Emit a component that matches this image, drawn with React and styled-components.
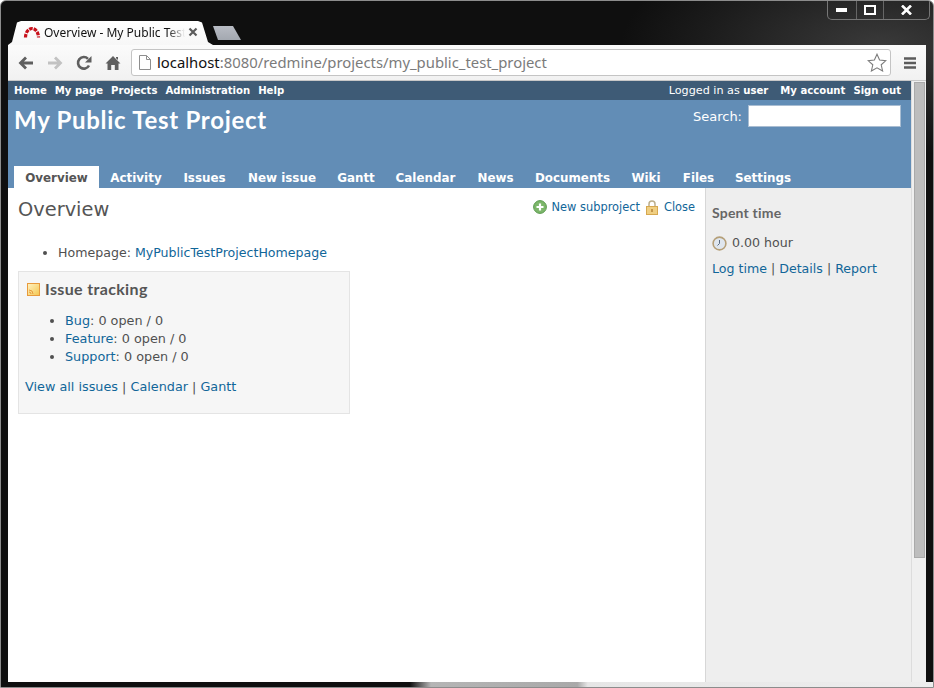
import React from 'react';
import styled, { createGlobalStyle } from 'styled-components';

const Global = createGlobalStyle`
  html, body { margin: 0; padding: 0; overflow: hidden; }
  body { font-family: "DejaVu Sans", Verdana, sans-serif; }
  ul { margin: 0; padding: 0; }
`;

const Window = styled.div`
  position: relative;
  box-sizing: border-box;
  width: 934px;
  height: 688px;
  display: flex;
  flex-direction: column;
  background: radial-gradient(ellipse 260px 110px at 880px 45px, #3a3a3a, #1b1b1b 70%, #0f0f0f);
  border: 1px solid #8c8c8c;
  border-radius: 6px 6px 0 0;
  overflow: hidden;
`;

const WindowControls = styled.div`
  position: absolute;
  top: -1px;
  right: 3px;
  width: 103px;
  height: 20px;
  display: flex;
  box-sizing: border-box;
  border: 1px solid #777;
  border-top: 0;
  border-radius: 0 0 5px 5px;
`;

const ControlButton = styled.div`
  width: ${p => p.$w}px;
  display: flex;
  align-items: center;
  justify-content: center;
  border-left: ${p => (p.$first ? 0 : '1px solid #666')};
`;

const TabStrip = styled.div`
  height: 44px;
  flex: none;
  display: flex;
  align-items: flex-end;
  padding-left: 7px;
`;

const Tab = styled.div`
  width: 205px;
  height: 24px;
  flex: none;
  box-sizing: border-box;
  display: flex;
  align-items: center;
  padding: 0 15px 2px;
  gap: 3px;
  background: linear-gradient(#ffffff, #f7f7f7);
  clip-path: polygon(0 100%, 4px 88%, 9px 6%, 13px 0, 190px 0, 194px 6%, 200px 88%, 205px 100%);
  font: 12px "Noto Sans", "Open Sans", sans-serif;
  color: #111;
`;

const TabTitle = styled.span`
  flex: 1;
  overflow: hidden;
  white-space: nowrap;
  -webkit-mask-image: linear-gradient(90deg, #000 88%, transparent);
  mask-image: linear-gradient(90deg, #000 88%, transparent);
`;

const NewTab = styled.div`
  width: 30px;
  height: 14px;
  margin: 0 0 5px -2px;
  background: linear-gradient(#b8bcc4, #a3a8b0);
  clip-path: polygon(2px 0, 22px 0, 30px 100%, 7px 100%);
`;

const Browser = styled.div`
  flex: 1;
  min-height: 0;
  display: flex;
  flex-direction: column;
  margin: 0 7px 5px 7px;
  background: #f1f1f1;
`;

const Toolbar = styled.div`
  height: 36px;
  flex: none;
  box-sizing: border-box;
  display: flex;
  align-items: center;
  background: linear-gradient(#fbfbfb, #f1f1f1);
  border-bottom: 1px solid #c8c8c8;
  padding-left: 3px;
`;

const NavButton = styled.div`
  width: ${p => p.$w || 29}px;
  flex: none;
  display: flex;
  justify-content: center;
  align-items: center;
`;

const Omnibox = styled.div`
  width: 760px;
  height: 27px;
  flex: none;
  margin-left: 4px;
  box-sizing: border-box;
  display: flex;
  align-items: center;
  gap: 6px;
  padding: 0 3px 0 7px;
  background: #fff;
  border: 1px solid #c4c4c4;
  border-radius: 3px;
  font: 14.85px "Noto Sans", "Open Sans", sans-serif;
  color: #7b7b7b;
`;

const Address = styled.span`
  flex: 1;
  padding-bottom: 2px;
  white-space: nowrap;
  b { font-weight: 400; color: #111; }
`;

const Viewport = styled.div`
  flex: 1;
  min-height: 0;
  display: flex;
  background: #fff;
`;

const Page = styled.div`
  width: 903px;
  flex: none;
  display: flex;
  flex-direction: column;
`;

const Scrollbar = styled.div`
  width: 15px;
  flex: none;
  box-sizing: border-box;
  padding: 1px 1px 0 2px;
  background: #efefef;
  border-left: 1px solid #dcdcdc;
`;

const Thumb = styled.div`
  height: 476px;
  background: #bdbdbd;
  border: 1px solid #a9a9a9;
  box-sizing: border-box;
`;

const TopMenu = styled.div`
  height: 19px;
  flex: none;
  box-sizing: border-box;
  display: flex;
  align-items: center;
  justify-content: space-between;
  padding: 0 10px 1px 6px;
  background: #3e5b76;
  color: #fff;
  font-size: 11.2px;
`;

const MenuGroup = styled.div`
  display: flex;
  align-items: baseline;
  gap: 8px;
`;

const MenuLink = styled.span`
  font-size: 10.1px;
  font-weight: 700;
  margin-left: ${p => p.$offset || 0}px;
`;

const Header = styled.div`
  height: 88px;
  flex: none;
  box-sizing: border-box;
  display: flex;
  flex-direction: column;
  background: #628db6;
  color: #fff;
  padding: 5px 10px 0 6px;
`;

const HeaderTop = styled.div`
  flex: 1;
  display: flex;
  justify-content: space-between;
  align-items: flex-start;
`;

const Title = styled.h1`
  margin: 0;
  font: 700 24px/30px "Lato", "Open Sans", sans-serif;
  letter-spacing: 0.72px;
`;

const Search = styled.div`
  display: flex;
  align-items: center;
  gap: 6px;
  font-size: 13px;
`;

const SearchInput = styled.div`
  width: 153px;
  height: 22px;
  box-sizing: border-box;
  background: #fff;
  border: 1px solid #a9bdd2;
`;

const Tabs = styled.div`
  display: flex;
  height: 22px;
  margin-right: -10px;
`;

const TabLink = styled.div`
  width: ${p => p.$w}px;
  flex: none;
  box-sizing: border-box;
  padding-top: 4px;
  margin-right: ${p => (p.$active ? 1 : 0)}px;
  font-size: 11.9px;
  font-weight: 700;
  line-height: 16px;
  text-align: center;
  white-space: nowrap;
  color: ${p => (p.$active ? '#555' : '#fff')};
  background: ${p => (p.$active ? '#fff' : 'transparent')};
`;

const Main = styled.div`
  flex: 1;
  min-height: 0;
  display: flex;
`;

const Content = styled.div`
  width: 697px;
  flex: none;
  box-sizing: border-box;
  padding: 8px 10px;
  background: #fff;
  color: #505050;
  font-size: 12.8px;
`;

const Sidebar = styled.div`
  flex: 1;
  box-sizing: border-box;
  padding: 17px 6px 0;
  background: #eeeeee;
  border-left: 1px solid #d7d7d7;
  color: #505050;
  font-size: 12.6px;
`;

const ContentHead = styled.div`
  display: flex;
  justify-content: space-between;
  align-items: flex-start;
  height: 48px;
`;

const Heading = styled.h2`
  margin: 0;
  padding-top: 1px;
  font: 400 19.4px/26px "DejaVu Sans", sans-serif;
  color: #555;
`;

const Actions = styled.div`
  display: flex;
  align-items: center;
  gap: 6px;
  font-size: 11.4px;
  line-height: 22px;
`;

const Action = styled.span`
  display: flex;
  align-items: center;
  gap: ${p => p.$gap}px;
`;

const Link = styled.a`
  color: #169;
  text-decoration: none;
`;

const Attributes = styled.ul`
  padding-left: 40px;
  line-height: 18px;
  margin-bottom: 9px;
  font-size: 12.6px;
`;

const Box = styled.div`
  width: 332px;
  height: 143px;
  box-sizing: border-box;
  padding: 6px;
  background: #f6f6f6;
  border: 1px solid #e4e4e4;
`;

const BoxTitle = styled.h3`
  margin: 0 0 12px;
  padding-left: 2px;
  display: flex;
  align-items: center;
  gap: 5px;
  font: 700 16px/22px "Lato", "Open Sans", sans-serif;
  letter-spacing: 0.35px;
  color: #555;
`;

const BoxList = styled.ul`
  padding-left: 40px;
  line-height: 18px;
  margin-bottom: 12px;
`;

const LinkRow = styled.div`
  line-height: 18px;
`;

const SideTitle = styled.h3`
  margin: 0 0 13px;
  font: 700 14px/16px "Lato", "Open Sans", sans-serif;
  letter-spacing: 0.2px;
  color: #666;
`;

const SpentRow = styled.div`
  display: flex;
  align-items: center;
  gap: 5px;
  line-height: 18px;
  margin-bottom: 8px;
`;

const BottomEdge = styled.div`
  position: absolute;
  left: 409px;
  right: 0;
  bottom: 0;
  height: 5px;
  background: linear-gradient(90deg, #111 0, #b5b5b5 4%, #a9a9a9 32%, #e6e6e6 34%, #ededed 100%);
`;

const RedmineIcon = () => (
  <svg width="18" height="12" viewBox="0 0 18 12">
    <path d="M2.5 11.5 A6.5 9 0 0 1 15.5 11.5" fill="none" stroke="#c8101a" strokeWidth="3.2" strokeDasharray="3.6 1" />
  </svg>
);

const CloseX = () => (
  <svg width="10" height="10" viewBox="0 0 10 10">
    <path d="M1.5 1.5 L8.5 8.5 M8.5 1.5 L1.5 8.5" stroke="#5c5c5c" strokeWidth="2.2" />
  </svg>
);

const BackIcon = ({ color }) => (
  <svg width="16" height="14" viewBox="0 0 16 14">
    <path d="M15 7 H3.5 M8 1.5 L2.5 7 L8 12.5" fill="none" stroke={color} strokeWidth="2.8" />
  </svg>
);

const ForwardIcon = ({ color }) => (
  <svg width="16" height="14" viewBox="0 0 16 14">
    <path d="M1 7 H12.5 M8 1.5 L13.5 7 L8 12.5" fill="none" stroke={color} strokeWidth="2.8" />
  </svg>
);

const ReloadIcon = () => (
  <svg width="16" height="16" viewBox="0 0 16 16">
    <path d="M13 10.5 A5.8 5.8 0 1 1 12 3.8" fill="none" stroke="#5f5f5f" strokeWidth="2.6" />
    <path d="M15.5 1 V7.5 H9 Z" fill="#5f5f5f" />
  </svg>
);

const HomeIcon = () => (
  <svg width="16" height="16" viewBox="0 0 16 16">
    <path d="M8 1 L15.5 8.5 H13.5 V15 H9.8 V10 H6.2 V15 H2.5 V8.5 H.5 Z" fill="#5f5f5f" />
    <path d="M11 2 H13 V5 L11 3.2 Z" fill="#5f5f5f" />
  </svg>
);

const PageIcon = () => (
  <svg width="12" height="15" viewBox="0 0 12 15">
    <path d="M.5.5 H7.5 L11.5 4.5 V14.5 H.5 Z M7.5.5 V4.5 H11.5" fill="#fff" stroke="#8e8e8e" />
  </svg>
);

const StarIcon = () => (
  <svg width="20" height="19" viewBox="0 0 20 19">
    <path d="M10 1.2 L12.6 7 L18.9 7.6 L14.2 11.8 L15.6 18 L10 14.8 L4.4 18 L5.8 11.8 L1.1 7.6 L7.4 7 Z" fill="#fff" stroke="#7c7c7c" strokeWidth="1.1" />
  </svg>
);

const MenuIcon = () => (
  <svg width="14" height="14" viewBox="0 0 14 14">
    <path d="M1 2.5 H13 M1 7 H13 M1 11.5 H13" stroke="#5c5c5c" strokeWidth="2.4" />
  </svg>
);

const AddIcon = () => (
  <svg width="14" height="14" viewBox="0 0 14 14">
    <circle cx="7" cy="7" r="6.4" fill="#7cb66a" stroke="#5c9a50" />
    <path d="M7 3.5 V10.5 M3.5 7 H10.5" stroke="#fff" strokeWidth="2.2" />
  </svg>
);

const LockIcon = () => (
  <svg width="12" height="15" viewBox="0 0 12 15">
    <path d="M3 7 V4 A3 3 0 0 1 9 4 V7" fill="none" stroke="#bcae8c" strokeWidth="1.5" />
    <rect x=".5" y="6.5" width="11" height="8" fill="#f0cf82" stroke="#d6a850" />
    <rect x="5" y="9" width="2" height="3" fill="#c4964a" />
  </svg>
);

const FeedIcon = () => (
  <svg width="13" height="13" viewBox="0 0 13 13">
    <defs>
      <linearGradient id="feedFill" x1="0" y1="0" x2="1" y2="1">
        <stop offset="0" stopColor="#fff3c4" />
        <stop offset="1" stopColor="#f4c64e" />
      </linearGradient>
    </defs>
    <rect x=".5" y=".5" width="12" height="12" fill="url(#feedFill)" stroke="#e89a3c" />
    <path d="M2 7 A4 4 0 0 1 6 11 M2 9 A2 2 0 0 1 4 11" fill="none" stroke="#e89a3c" />
  </svg>
);

const ClockIcon = () => (
  <svg width="15" height="15" viewBox="0 0 15 15">
    <circle cx="7.5" cy="7.5" r="6.4" fill="#dfe6ee" stroke="#b59f78" strokeWidth="1.6" />
    <path d="M7.5 4 V7.5 L5.5 9.5" fill="none" stroke="#5a6a80" />
  </svg>
);

const topLeft = ['Home', 'My page', 'Projects', 'Administration', 'Help'];
const tabs = [
  { label: 'Overview', width: 85 },
  { label: 'Activity', width: 72 },
  { label: 'Issues', width: 65 },
  { label: 'New issue', width: 90 },
  { label: 'Gantt', width: 58 },
  { label: 'Calendar', width: 81 },
  { label: 'News', width: 59 },
  { label: 'Documents', width: 95 },
  { label: 'Wiki', width: 52 },
  { label: 'Files', width: 53 },
  { label: 'Settings', width: 76 },
];
const trackers = ['Bug', 'Feature', 'Support'];

export default function App() {
  return (
    <>
      <Global />
      <Window>
        <WindowControls>
          <ControlButton $w={29} $first>
            <svg width="11" height="4"><rect width="11" height="4" fill="#fff" /></svg>
          </ControlButton>
          <ControlButton $w={27}>
            <svg width="12" height="10"><rect x="1" y="1" width="10" height="8" fill="none" stroke="#fff" strokeWidth="2" /></svg>
          </ControlButton>
          <ControlButton $w={47}>
            <svg width="11" height="10" viewBox="0 0 11 10"><path d="M1 .5 L10 9.5 M10 .5 L1 9.5" stroke="#fff" strokeWidth="2.6" /></svg>
          </ControlButton>
        </WindowControls>
        <TabStrip>
          <Tab>
            <RedmineIcon />
            <TabTitle>Overview - My Public Test Project</TabTitle>
            <CloseX />
          </Tab>
          <NewTab />
        </TabStrip>
        <Browser>
          <Toolbar>
            <NavButton><BackIcon color="#5f5f5f" /></NavButton>
            <NavButton><ForwardIcon color="#c2c2c2" /></NavButton>
            <NavButton><ReloadIcon /></NavButton>
            <NavButton><HomeIcon /></NavButton>
            <Omnibox>
              <PageIcon />
              <Address><b>localhost</b>:8080/redmine/projects/my_public_test_project</Address>
              <StarIcon />
            </Omnibox>
            <NavButton $w={38}><MenuIcon /></NavButton>
          </Toolbar>
          <Viewport>
            <Page>
              <TopMenu>
                <MenuGroup>
                  {topLeft.map(item => <MenuLink key={item}>{item}</MenuLink>)}
                </MenuGroup>
                <MenuGroup>
                  <span>Logged in as <MenuLink>user</MenuLink></span>
                  <MenuLink $offset={4}>My account</MenuLink>
                  <MenuLink>Sign out</MenuLink>
                </MenuGroup>
              </TopMenu>
              <Header>
                <HeaderTop>
                  <Title>My Public Test Project</Title>
                  <Search>
                    Search:
                    <SearchInput />
                  </Search>
                </HeaderTop>
                <Tabs>
                  {tabs.map((t, i) => <TabLink key={t.label} $w={t.width} $active={i === 0}>{t.label}</TabLink>)}
                </Tabs>
              </Header>
              <Main>
                <Content>
                  <ContentHead>
                    <Heading>Overview</Heading>
                    <Actions>
                      <Action $gap={5}><AddIcon /><Link>New subproject</Link></Action>
                      <Action $gap={6}><LockIcon /><Link>Close</Link></Action>
                    </Actions>
                  </ContentHead>
                  <Attributes>
                    <li>Homepage: <Link>MyPublicTestProjectHomepage</Link></li>
                  </Attributes>
                  <Box>
                    <BoxTitle><FeedIcon />Issue tracking</BoxTitle>
                    <BoxList>
                      {trackers.map(t => <li key={t}><Link>{t}</Link>: 0 open / 0</li>)}
                    </BoxList>
                    <LinkRow><Link>View all issues</Link> | <Link>Calendar</Link> | <Link>Gantt</Link></LinkRow>
                  </Box>
                </Content>
                <Sidebar>
                  <SideTitle>Spent time</SideTitle>
                  <SpentRow><ClockIcon />0.00 hour</SpentRow>
                  <LinkRow><Link>Log time</Link> | <Link>Details</Link> | <Link>Report</Link></LinkRow>
                </Sidebar>
              </Main>
            </Page>
            <Scrollbar><Thumb /></Scrollbar>
          </Viewport>
        </Browser>
        <BottomEdge />
      </Window>
    </>
  );
}
